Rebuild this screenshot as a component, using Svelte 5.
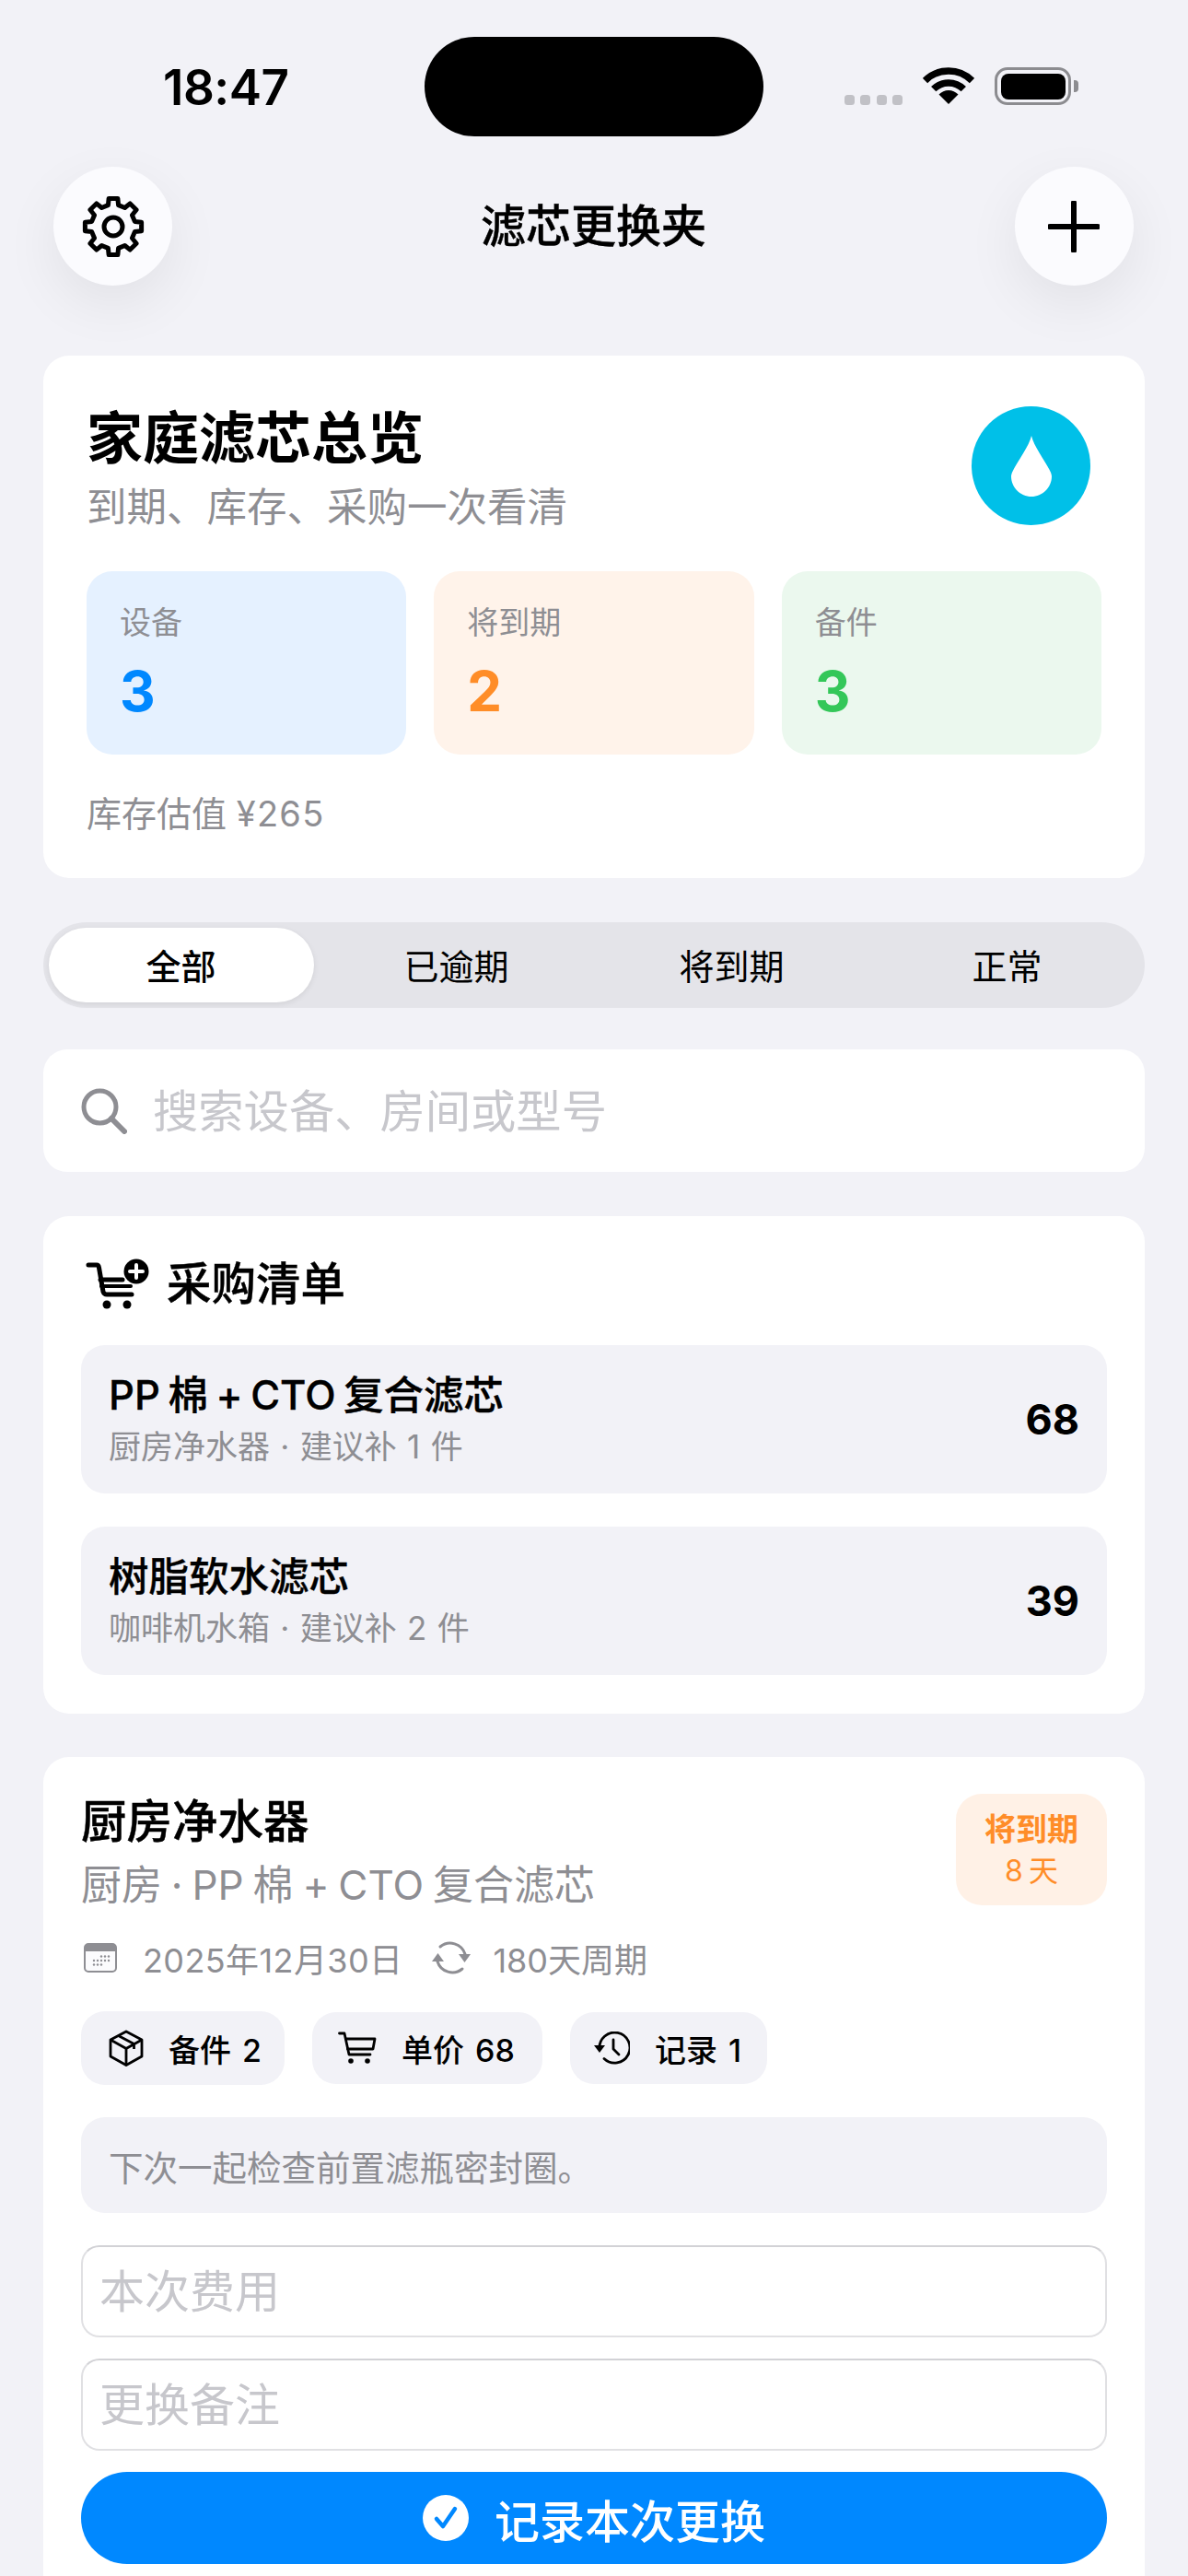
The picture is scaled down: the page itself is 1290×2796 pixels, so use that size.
<script>
  const tabs = ['全部', '已逾期', '将到期', '正常'];
  const stats = [
    { label: '设备', value: 3, tone: 'blue' },
    { label: '将到期', value: 2, tone: 'orange' },
    { label: '备件', value: 3, tone: 'green' }
  ];
  const items = [
    { name: 'PP 棉 + CTO 复合滤芯', sub: '厨房净水器 · 建议补 1 件', price: 68 },
    { name: '树脂软水滤芯', sub: '咖啡机水箱 · 建议补 2 件', price: 39 }
  ];
  function gear(cx, cy, ro, ri, n) {
    let d = '';
    const step = (Math.PI * 2) / n;
    for (let i = 0; i < n; i++) {
      const a = -Math.PI / 2 + i * step;
      const pts = [
        [ri, a - step * 0.3],
        [ro, a - step * 0.2],
        [ro, a + step * 0.2],
        [ri, a + step * 0.3]
      ];
      for (const [r, t] of pts) {
        d += (d ? 'L' : 'M') + (cx + r * Math.cos(t)).toFixed(2) + ' ' + (cy + r * Math.sin(t)).toFixed(2);
      }
    }
    return d + 'Z';
  }
  const gearPath = gear(36, 36, 31, 24, 8);
  const calDots = [];
  for (let r = 0; r < 3; r++) for (let c = 0; c < 5; c++) {
    if ((r === 0 && c < 2) || (r === 2 && c > 2)) continue;
    calDots.push([9.5 + c * 4, 15.5 + r * 4.5]);
  }
</script>

<div class="page">
  <header class="status">
    <span class="time">18:47</span>
    <div class="island"></div>
    <div class="sys">
      <div class="dots"><i></i><i></i><i></i><i></i></div>
      <svg class="wifi" width="56" height="40" viewBox="0 0 56 40">
        <path d="M2.5 14.5A36 36 0 0 1 53.5 14.5" fill="none" stroke="#000" stroke-width="7.5"/>
        <path d="M11.7 23.7A23 23 0 0 1 44.3 23.7" fill="none" stroke="#000" stroke-width="7.5"/>
        <path d="M28 40L17.5 29.5A14.5 14.5 0 0 1 38.5 29.5Z" fill="#000"/>
      </svg>
      <div class="battery"><div class="level"></div></div>
      <div class="nub"></div>
    </div>
  </header>

  <nav class="topbar">
    <div class="round">
      <svg width="72" height="72" viewBox="0 0 72 72" fill="none" stroke="#000" stroke-width="5" stroke-linejoin="round">
        <path d={gearPath}/>
        <circle cx="36" cy="36" r="10"/>
      </svg>
    </div>
    <h1>滤芯更换夹</h1>
    <div class="round">
      <svg width="56" height="56" viewBox="0 0 56 56" fill="none" stroke="#000" stroke-width="6" stroke-linecap="round">
        <path d="M28 2V54M2 28H54"/>
      </svg>
    </div>
  </nav>

  <section class="card overview">
    <div class="ov-head">
      <div>
        <h2>家庭滤芯总览</h2>
        <p>到期、库存、采购一次看清</p>
      </div>
      <div class="drop">
        <svg width="46" height="66" viewBox="0 0 46 66"><path d="M23 0C26 14 45 36 45 44C45 56 35 66 23 66C11 66 1 56 1 44C1 36 20 14 23 0Z" fill="#fff"/></svg>
      </div>
    </div>
    <div class="tiles">
      {#each stats as s}
        <div class="tile {s.tone}">
          <div class="tile-label">{s.label}</div>
          <div class="tile-value">{s.value}</div>
        </div>
      {/each}
    </div>
    <div class="worth">库存估值 <span>¥265</span></div>
  </section>

  <div class="segment">
    {#each tabs as t, i}
      <div class="seg" class:on={i === 0}>{t}</div>
    {/each}
  </div>

  <div class="search">
    <svg width="50" height="50" viewBox="0 0 50 50" fill="none" stroke="#8e8e93" stroke-width="5" stroke-linecap="round">
      <circle cx="20.5" cy="20.5" r="17.5"/>
      <path d="M33 33L47 47" stroke-width="6"/>
    </svg>
    <input placeholder="搜索设备、房间或型号" />
  </div>

  <section class="card buy">
    <div class="buy-head">
      <svg width="70" height="58" viewBox="12 10 70 58" fill="none" stroke="#000" stroke-width="5" stroke-linecap="round" stroke-linejoin="round">
        <path d="M15 18H24Q26 18 26.500 21L31 47Q32 50 35 50H62"/>
        <path d="M28 34H52"/>
        <path d="M29 41H61" stroke-width="4"/>
        <circle cx="35" cy="61" r="4.500" fill="#000" stroke="none"/>
        <circle cx="57" cy="61" r="4.500" fill="#000" stroke="none"/>
        <circle cx="67" cy="25" r="13.500" fill="#000" stroke="none"/>
        <path d="M67 18V32M60 25H74" stroke="#fff" stroke-width="4"/>
      </svg>
      <h3>采购清单</h3>
    </div>
    <div class="rows">
      {#each items as it}
        <div class="row">
          <div class="row-text">
            <div class="row-name">{it.name}</div>
            <div class="row-sub">{it.sub}</div>
          </div>
          <div class="row-price">{it.price}</div>
        </div>
      {/each}
    </div>
  </section>

  <section class="card device">
    <div class="dev-head">
      <div>
        <h2 class="dev-title">厨房净水器</h2>
        <p class="dev-sub">厨房 · PP 棉 + CTO 复合滤芯</p>
      </div>
      <div class="badge">
        <strong>将到期</strong>
        <span>8 天</span>
      </div>
    </div>

    <div class="meta">
      <svg width="36" height="32" viewBox="0 0 36 32">
        <rect x="1" y="1" width="34" height="30" rx="4" fill="#fbfbfd" stroke="#8e8e93" stroke-width="2"/>
        <path d="M1 9V5a4 4 0 0 1 4-4H31a4 4 0 0 1 4 4V9Z" fill="#8e8e93"/>
        {#each calDots as d}
          <circle cx={d[0] + 1.500} cy={d[1] - 1} r="1.200" fill="#8e8e93"/>
        {/each}
      </svg>
      <span class="date">2025年12月30日</span>
      <svg class="sync" width="44" height="42" viewBox="0 0 44 42" fill="none" stroke="#8e8e93" stroke-width="3" stroke-linecap="round">
        <path d="M10 9A17 17 0 0 1 37 17"/>
        <path d="M34 33A17 17 0 0 1 7 25"/>
        <path d="M30 17H43L36.500 26Z" fill="#8e8e93" stroke="none"/>
        <path d="M1 25H14L7.500 16Z" fill="#8e8e93" stroke="none"/>
      </svg>
      <span class="cycle">180天周期</span>
    </div>

    <div class="chips">
      <div class="chip first">
        <svg width="38" height="40" viewBox="0 0 38 40" fill="none" stroke="#000" stroke-width="2.800" stroke-linejoin="round">
          <path d="M19 2L36 11V29L19 38.500L2 29V11Z"/>
          <path d="M2 11L19 20.500L36 11M19 20.500V38.500M10.500 6.500L27.500 15.500V21"/>
        </svg>
        <span>备件 2</span>
      </div>
      <div class="chip second">
        <svg class="cart" width="42" height="36" viewBox="0 0 42 36" fill="none" stroke="#000" stroke-width="2.800" stroke-linecap="round" stroke-linejoin="round">
          <path d="M1.500 2H7L12 25H35"/>
          <path d="M8.500 8H40L38 19H10.500"/>
          <circle cx="14" cy="32" r="2.800" fill="#000" stroke="none"/>
          <circle cx="32" cy="32" r="2.800" fill="#000" stroke="none"/>
        </svg>
        <span>单价 68</span>
      </div>
      <div class="chip third">
        <svg width="40" height="36" viewBox="0 0 40 36" fill="none" stroke="#000" stroke-width="2.800" stroke-linecap="round" stroke-linejoin="round">
          <path d="M7 19A16.500 16.500 0 1 1 12 29.500"/>
          <path d="M1 15H13L7 23Z" fill="#000" stroke="none"/>
          <path d="M22 9V19L28 25"/>
        </svg>
        <span>记录 1</span>
      </div>
    </div>

    <div class="note">下次一起检查前置滤瓶密封圈。</div>

    <input class="field" placeholder="本次费用" />
    <input class="field" placeholder="更换备注" />

    <div class="primary">
      <svg width="50" height="50" viewBox="0 0 50 50">
        <circle cx="25" cy="25" r="25" fill="#fff"/>
        <path d="M15 26L22 34L35 15" fill="none" stroke="#0088ff" stroke-width="4.500" stroke-linecap="round" stroke-linejoin="round"/>
      </svg>
      <span>记录本次更换</span>
    </div>
  </section>
</div>

<style>
  :global(body) {
    margin: 0;
    background: #f2f2f7;
  }
  .page {
    width: 1290px;
    height: 2796px;
    overflow: hidden;
    box-sizing: border-box;
    padding: 0 47px;
    position: relative;
    background: #f2f2f7;
    color: #000;
    font-family: Inter, "Noto Sans CJK SC", sans-serif;
  }
  h1, h2, h3, p { margin: 0; font-weight: inherit; }

  .status {
    height: 181px;
    box-sizing: border-box;
    padding: 67px 72px 0 130px;
    display: flex;
    justify-content: space-between;
    align-items: flex-start;
  }
  .time {
    font-size: 53px;
    line-height: 56px;
    font-weight: 600;
    letter-spacing: -0.5px;
  }
  .island {
    position: absolute;
    left: 461px;
    top: 40px;
    width: 368px;
    height: 108px;
    border-radius: 54px;
    background: #000;
  }
  .sys {
    display: flex;
    align-items: flex-start;
    padding-top: 6px;
  }
  .dots {
    display: flex;
    gap: 6.500px;
    margin: 30px 22px 0 0;
  }
  .dots i {
    width: 11px;
    height: 11px;
    border-radius: 3.500px;
    background: #c1c1c6;
  }
  .wifi { margin-right: 22px; }
  .battery {
    width: 83px;
    height: 41px;
    box-sizing: border-box;
    border: 3.500px solid #8c8c90;
    border-radius: 14px;
    padding: 3.500px;
  }
  .level {
    height: 100%;
    background: #000;
    border-radius: 8px;
  }
  .nub {
    width: 5px;
    height: 13px;
    margin: 14px 0 0 3px;
    background: #8c8c90;
    border-radius: 0 4px 4px 0;
  }

  .topbar {
    height: 129px;
    margin: 0 12px 76px 11px;
    display: flex;
    align-items: center;
    justify-content: space-between;
  }
  .round {
    width: 129px;
    height: 129px;
    border-radius: 50%;
    background: #fbfbfe;
    box-shadow: 0 20px 60px rgba(0, 0, 0, 0.07);
    display: flex;
    align-items: center;
    justify-content: center;
  }
  h1 {
    font-size: 49px;
    font-weight: 500;
    line-height: 60px;
    -webkit-text-stroke: 0.4px #000;
  }

  .card {
    background: #fff;
    border-radius: 28px;
  }

  .overview {
    height: 567px;
    box-sizing: border-box;
    padding: 55px 47px 0;
  }
  .ov-head {
    display: flex;
    justify-content: space-between;
    padding-right: 12px;
    height: 179px;
  }
  .ov-head h2 {
    font-size: 61px;
    font-weight: 700;
    line-height: 70px;
  }
  .ov-head p {
    font-size: 43.500px;
    line-height: 60px;
    margin-top: 9px;
    color: #8e8e93;
  }
  .drop {
    width: 129px;
    height: 129px;
    border-radius: 50%;
    background: #00c0e8;
    display: flex;
    align-items: center;
    justify-content: center;
  }
  .tiles {
    display: grid;
    grid-template-columns: repeat(3, 1fr);
    gap: 30px;
  }
  .tile {
    height: 199px;
    box-sizing: border-box;
    border-radius: 28px;
    padding: 34px 36px 0;
  }
  .tile.blue { background: #e5f1ff; }
  .tile.orange { background: #fff3ea; }
  .tile.green { background: #ebf8ee; }
  .tile-label {
    font-size: 34px;
    line-height: 44px;
    color: #8e8e93;
  }
  .tile-value {
    font-size: 60px;
    font-weight: 700;
    line-height: 70px;
    margin-top: 17px;
  }
  .blue .tile-value { color: #0088ff; }
  .orange .tile-value { color: #ff8d28; }
  .green .tile-value { color: #34c759; }
  .worth {
    margin-top: 39px;
    font-size: 38px;
    line-height: 50px;
    color: #8e8e93;
  }
  .worth span { letter-spacing: 1.300px; }

  .segment {
    margin-top: 48px;
    height: 93px;
    border-radius: 47px;
    background: #e4e4e9;
    display: grid;
    grid-template-columns: repeat(4, 1fr);
  }
  .seg {
    margin: 6px 5.500px;
    padding-bottom: 2px;
    display: flex;
    align-items: center;
    justify-content: center;
    font-size: 38px;
    border-radius: 41px;
  }
  .seg.on {
    background: #fff;
    font-weight: 500;
    box-shadow: 0 2px 6px rgba(0, 0, 0, 0.08);
  }

  .search {
    margin-top: 45px;
    height: 133px;
    box-sizing: border-box;
    padding-left: 41px;
    background: #fff;
    border-radius: 26px;
    display: flex;
    align-items: center;
    gap: 28px;
  }
  input {
    font-family: inherit;
    border: 0;
    outline: 0;
    background: none;
    padding: 0;
    color: #000;
  }
  input::placeholder {
    color: #c7c7cc;
    opacity: 1;
  }
  .search input {
    flex: 1;
    font-size: 49.300px;
  }

  .buy {
    margin-top: 48px;
    height: 540px;
    box-sizing: border-box;
    padding: 42px 41px 0;
  }
  .buy-head {
    display: flex;
    align-items: center;
    gap: 18px;
    height: 64px;
    padding-left: 5px;
    margin-bottom: 34px;
  }
  .buy-head h3 {
    font-size: 48.500px;
    font-weight: 500;
    line-height: 60px;
    -webkit-text-stroke: 0.4px #000;
  }
  .rows {
    display: flex;
    flex-direction: column;
    gap: 36px;
  }
  .row {
    height: 161px;
    box-sizing: border-box;
    padding: 0 30px;
    background: #f2f2f7;
    border-radius: 26px;
    display: flex;
    align-items: center;
    justify-content: space-between;
  }
  .row-name {
    font-size: 43.500px;
    font-weight: 500;
    line-height: 56px;
    word-spacing: -3px;
    -webkit-text-stroke: 0.4px #000;
    margin-top: -2px;
  }
  .row-sub {
    font-size: 35px;
    line-height: 46px;
    margin-top: 5px;
    word-spacing: 1.500px;
    color: #8e8e93;
  }
  .row-price {
    font-size: 45px;
    font-weight: 700;
  }

  .device {
    margin-top: 47px;
    height: 1000px;
    box-sizing: border-box;
    padding: 40px 41px 0;
  }
  .dev-head {
    display: flex;
    justify-content: space-between;
    align-items: flex-start;
    height: 128px;
  }
  .dev-title {
    font-size: 49.500px;
    font-weight: 500;
    line-height: 60px;
    -webkit-text-stroke: 0.4px #000;
  }
  .dev-sub {
    font-size: 44px;
    line-height: 58px;
    margin-top: 10px;
    word-spacing: -2.500px;
    color: #8e8e93;
  }
  .badge {
    width: 164px;
    height: 121px;
    border-radius: 28px;
    background: #fff1e6;
    color: #ff8d28;
    display: flex;
    flex-direction: column;
    align-items: center;
    justify-content: center;
    gap: 4px;
  }
  .badge strong {
    font-size: 34px;
    line-height: 42px;
    font-weight: 700;
  }
  .badge span {
    font-size: 32px;
    line-height: 40px;
    word-spacing: -3px;
  }
  .meta {
    margin-top: 25px;
    height: 50px;
    display: flex;
    align-items: center;
    padding-left: 3px;
    font-size: 36px;
    color: #8e8e93;
  }
  .date { margin-left: 28px; letter-spacing: 0.4px; }
  .sync { margin-left: 31px; }
  .cycle { margin-left: 23px; }

  .chips {
    margin-top: 33px;
    height: 80px;
    display: flex;
    align-items: center;
    gap: 30px;
  }
  .chip {
    height: 78px;
    box-sizing: border-box;
    padding: 0 28px;
    background: #f2f2f7;
    border-radius: 26px;
    display: flex;
    align-items: center;
    gap: 27px;
    font-size: 34px;
    font-weight: 500;
    word-spacing: 3px;
  }
  .chip.first { height: 80px; padding: 0 25px 0 30px; }
  .chip.second { padding-right: 30px; }
  .chip.third { padding-left: 25px; }

  .note {
    margin-top: 35px;
    height: 104px;
    box-sizing: border-box;
    padding-left: 30px;
    display: flex;
    align-items: center;
    background: #f2f2f7;
    border-radius: 26px;
    font-size: 37.500px;
    color: #8e8e93;
  }
  .field {
    display: block;
    width: 100%;
    height: 100px;
    box-sizing: border-box;
    margin-top: 23px;
    padding: 0 18px;
    font-size: 49px;
    border: 2px solid #e0e0e3;
    border-top-color: #d2d2d6;
    border-radius: 20px;
  }
  .note + .field { margin-top: 35px; }
  .primary {
    margin-top: 23px;
    height: 100px;
    border-radius: 50px;
    background: #0088ff;
    color: #fff;
    display: flex;
    align-items: center;
    justify-content: center;
    gap: 28px;
    font-size: 49px;
    font-weight: 500;
  }
</style>
